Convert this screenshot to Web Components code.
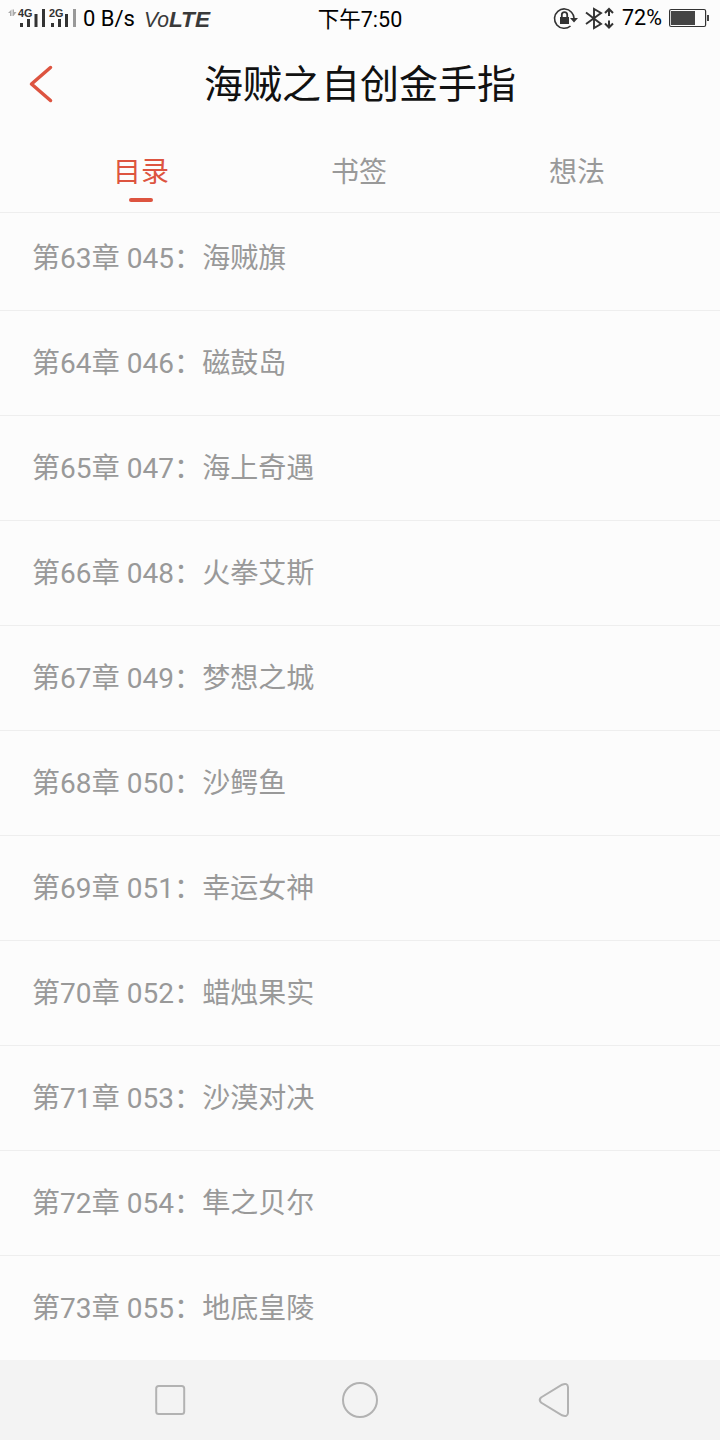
<!DOCTYPE html>
<html lang="zh-CN">
<head>
<meta charset="utf-8">
<title>海贼之自创金手指</title>
<style>
    body {
        margin: 0;
        background: #fcfcfc;
        font-family: Roboto, "Noto Sans CJK SC", sans-serif;
    }
</style>
</head>
<body>
<reader-app>
    <status-bar slot="status" speed="0 B/s" time="下午7:50" battery="72"></status-bar>
    <title-bar slot="title">海贼之自创金手指</title-bar>
    <tab-bar slot="tabs">
        <tab-item active>目录</tab-item>
        <tab-item>书签</tab-item>
        <tab-item>想法</tab-item>
    </tab-bar>
    <chapter-list>
        <chapter-item>第63章 045：海贼旗</chapter-item>
        <chapter-item>第64章 046：磁鼓岛</chapter-item>
        <chapter-item>第65章 047：海上奇遇</chapter-item>
        <chapter-item>第66章 048：火拳艾斯</chapter-item>
        <chapter-item>第67章 049：梦想之城</chapter-item>
        <chapter-item>第68章 050：沙鳄鱼</chapter-item>
        <chapter-item>第69章 051：幸运女神</chapter-item>
        <chapter-item>第70章 052：蜡烛果实</chapter-item>
        <chapter-item>第71章 053：沙漠对决</chapter-item>
        <chapter-item>第72章 054：隼之贝尔</chapter-item>
        <chapter-item>第73章 055：地底皇陵</chapter-item>
    </chapter-list>
    <nav-bar slot="nav"></nav-bar>
</reader-app>

<script>
class BaseElement extends HTMLElement {
    constructor() {
        super();
        this._shadowRoot = this.attachShadow({ mode: 'open' });
        this._shadowRoot.innerHTML = this.constructor.template;
    }
}

class ReaderApp extends BaseElement {
    static get template() {
        return `
            <style>
                :host {
                    display: flex;
                    flex-direction: column;
                    width: 720px;
                    height: 1440px;
                    overflow: hidden;
                }
                main {
                    flex: 1;
                    min-height: 0;
                    overflow: hidden;
                }
            </style>
            <slot name="status"></slot>
            <slot name="title"></slot>
            <slot name="tabs"></slot>
            <main><slot></slot></main>
            <slot name="nav"></slot>
        `;
    }
}

class StatusBar extends BaseElement {
    static get template() {
        return `
            <style>
                :host {
                    display: grid;
                    grid-template-columns: 1fr auto 1fr;
                    align-items: center;
                    height: 38px;
                    font-size: 22px;
                    line-height: 38px;
                    color: #000;
                }
                svg {
                    display: block;
                    flex: none;
                }
                .side {
                    display: flex;
                    align-items: center;
                    height: 38px;
                }
                .right {
                    justify-content: flex-end;
                }
                .speed {
                    width: 61px;
                    line-height: 38px;
                    height: 38px;
                }
                .time {
                    height: 38px;
                    font-size: 21.5px;
                    line-height: 40px;
                }
                .battery {
                    width: 47px;
                    height: 38px;
                    line-height: 36px;
                    font-size: 21.5px;
                }
                .label {
                    font: bold 11px "Liberation Sans", sans-serif;
                }
                .volte {
                    font: italic 22px "Liberation Sans", sans-serif;
                }
                .volte.bold {
                    font-weight: bold;
                }
            </style>
            <div class="side">
                <svg width="83" height="38" fill="#333">
                    <path fill="#aaa" d="M8 13l3.5-3.500V16H10v-3zM12.500 9.500H14V12h2.500L13.500 16h-1z"/>
                    <text class="label" x="18" y="16.500" textLength="14.500" lengthAdjust="spacingAndGlyphs">4G</text>
                    <path d="M20 23h3v4h-3zM27 19h3v8h-3zM34.500 14h3v13h-3zM42 9h3v18h-3z"/>
                    <text class="label" x="49" y="16.500" textLength="14.500" lengthAdjust="spacingAndGlyphs">2G</text>
                    <path d="M51 23h3v4h-3zM58 19h3v8h-3zM65 14h3v13h-3z"/>
                    <path fill="#999" d="M73 9h3v18h-3z"/>
                </svg>
                <span class="speed"></span>
                <svg width="70" height="38" fill="#3a3a3a">
                    <text class="volte" x="0" y="26.500" textLength="25" lengthAdjust="spacingAndGlyphs">Vo</text>
                    <text class="volte bold" x="25" y="26.500" textLength="41" lengthAdjust="spacingAndGlyphs">LTE</text>
                </svg>
            </div>
            <span class="time"></span>
            <div class="side right">
                <svg width="72" height="38" fill="none" stroke="#333" stroke-width="1.600">
                    <path d="M21.500 12.200A9.700 9.700 0 1 0 20.500 26M21.500 12.200A9.700 9.700 0 0 1 24 18"/>
                    <path fill="#333" stroke="none" d="M20 18h8l-4 4.500zM10 17h9v7h-9z"/>
                    <path d="M11.800 17v-2.200a2.700 2.700 0 0 1 5.400 0V17" stroke-width="1.800"/>
                    <path stroke-width="1.900" d="M36 12.500l15 11.500-7 4V9l7 4-15 11"/>
                    <path stroke-width="2" d="M59 9.500V16M55 13l4-4 4 4M59 20.500V27M55 23.500l4 4 4-4"/>
                </svg>
                <span class="battery"></span>
                <svg width="51" height="38" fill="none">
                    <rect x=".600" y="9.500" width="36" height="17" rx="1.500" stroke="#333" stroke-width="1.200"/>
                    <path fill="#444" d="M2 11h24v14H2zM38 15h2v6h-2z"/>
                </svg>
            </div>
        `;
    }
    connectedCallback() {
        this._shadowRoot.querySelector('.speed').textContent = this.getAttribute('speed');
        this._shadowRoot.querySelector('.time').textContent = this.getAttribute('time');
        this._shadowRoot.querySelector('.battery').textContent = this.getAttribute('battery') + '%';
    }
}

class TitleBar extends BaseElement {
    static get template() {
        return `
            <style>
                :host {
                    display: grid;
                    grid-template-columns: 80px 1fr 80px;
                    align-items: center;
                    height: 92px;
                    color: #111;
                }
                svg {
                    display: block;
                }
                h1 {
                    margin: 0;
                    padding-top: 2px;
                    font-size: 39px;
                    font-weight: 400;
                    line-height: 90px;
                    text-align: center;
                }
            </style>
            <svg width="80" height="92" fill="none" stroke="#dd5440" stroke-width="3.500" stroke-linecap="round" stroke-linejoin="round">
                <path d="M50.500 29.500L31.500 46l19 16.500"/>
            </svg>
            <h1><slot></slot></h1>
        `;
    }
}

class TabBar extends BaseElement {
    static get template() {
        return `
            <style>
                :host {
                    display: grid;
                    grid-template-columns: repeat(3, 218px);
                    box-sizing: border-box;
                    height: 83px;
                    padding-left: 32px;
                    border-bottom: 1px solid #eee;
                }
            </style>
            <slot></slot>
        `;
    }
}

class TabItem extends BaseElement {
    static get template() {
        return `
            <style>
                :host {
                    display: flex;
                    flex-direction: column;
                    align-items: center;
                    padding-top: 23px;
                    font-size: 28px;
                    line-height: 40px;
                    color: #999;
                }
                :host([active]) {
                    color: #dd5440;
                }
                :host([active])::after {
                    content: "";
                    width: 24px;
                    height: 4px;
                    margin-top: 5px;
                    border-radius: 2px;
                    background: currentColor;
                }
            </style>
            <slot></slot>
        `;
    }
}

class ChapterList extends BaseElement {
    static get template() {
        return `
            <style>
                :host {
                    display: block;
                    margin-top: -7px;
                }
            </style>
            <slot></slot>
        `;
    }
}

class ChapterItem extends BaseElement {
    static get template() {
        return `
            <style>
                :host {
                    display: block;
                    box-sizing: border-box;
                    height: 105px;
                    padding: 0 32px;
                    border-bottom: 1px solid #eee;
                    font-size: 28px;
                    line-height: 106px;
                    letter-spacing: 0.06px;
                    color: #999;
                    white-space: nowrap;
                }
            </style>
            <slot></slot>
        `;
    }
}

class NavBar extends BaseElement {
    static get template() {
        return `
            <style>
                :host {
                    display: flex;
                    justify-content: center;
                    align-items: center;
                    gap: 150px;
                    height: 80px;
                    background: #f3f3f3;
                }
                svg {
                    display: block;
                    fill: none;
                    stroke: #b2b2b2;
                    stroke-width: 2;
                }
            </style>
            <svg width="40" height="40"><rect x="6.200" y="6" width="28" height="28" rx="2.500"/></svg>
            <svg width="40" height="40"><circle cx="20" cy="20" r="17"/></svg>
            <svg width="40" height="40"><path d="M11 17.500L32 4.700Q37.500 2.500 38 7v26Q37.500 37.500 32 35.300L11 22.500Q8.500 20 11 17.500z"/></svg>
        `;
    }
}

window.customElements.define('reader-app', ReaderApp);
window.customElements.define('status-bar', StatusBar);
window.customElements.define('title-bar', TitleBar);
window.customElements.define('tab-bar', TabBar);
window.customElements.define('tab-item', TabItem);
window.customElements.define('chapter-list', ChapterList);
window.customElements.define('chapter-item', ChapterItem);
window.customElements.define('nav-bar', NavBar);
</script>
</body>
</html>
